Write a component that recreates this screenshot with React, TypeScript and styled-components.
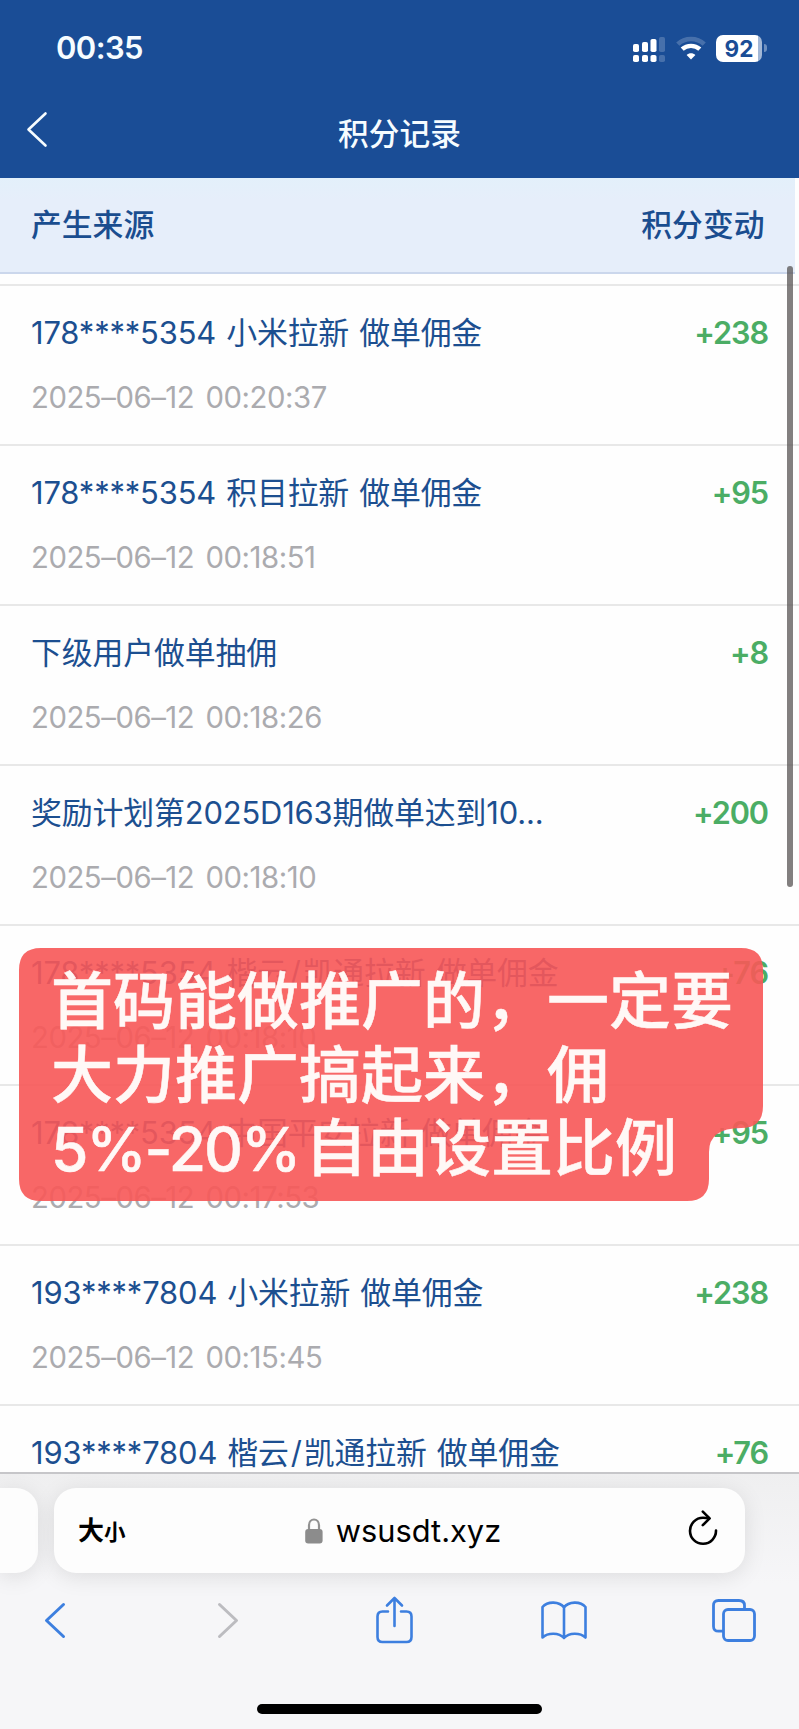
import React from 'react';
import styled, { createGlobalStyle } from 'styled-components';

const GlobalStyle = createGlobalStyle`
  *, *::before, *::after { box-sizing: border-box; }
  body {
    margin: 0;
    background: #fefefe;
    font-family: Inter, "Noto Sans CJK SC", sans-serif;
  }
  svg { display: block; flex: none; overflow: visible; }
`;

const Screen = styled.div`
  position: relative;
  display: flex;
  flex-direction: column;
  width: 799px;
  height: 1729px;
  overflow: hidden;
  background: #fefefe;
`;

const Header = styled.header`
  flex: none;
  height: 178px;
  background: #1a4d96;
  color: #f6fcff;
`;

const StatusBar = styled.div`
  display: flex;
  align-items: center;
  justify-content: space-between;
  height: 96px;
  padding: 0 32px 0 56px;
`;

const Clock = styled.span`
  font-size: 31px;
  font-weight: 600;
  line-height: 40px;
  letter-spacing: -0.6px;
`;

const StatusIcons = styled.div`
  display: flex;
  align-items: center;
  gap: 10px;
`;

const Battery = styled.div`
  display: flex;
  align-items: center;
  gap: 2px;
`;

const BatteryBody = styled.span`
  width: 46px;
  height: 27px;
  border-radius: 7px;
  background: linear-gradient(90deg, #fff 42px, #a3b8d6 42px);
  color: #1a4d96;
  font-size: 22.5px;
  font-weight: 700;
  line-height: 27px;
  text-align: center;
`;

const BatteryTip = styled.span`
  width: 3px;
  height: 8px;
  border-radius: 0 3px 3px 0;
  background: #6d8fbf;
`;

const TitleBar = styled.div`
  display: grid;
  grid-template-columns: 100px 1fr 100px;
  align-items: center;
  height: 76px;
  padding-left: 27px;
  padding-right: 27px;
  > svg { margin-bottom: 9px; }
`;

const Title = styled.h1`
  margin: 0;
  font-size: 30.7px;
  font-weight: 500;
  line-height: 40px;
  text-align: center;
`;

const ColumnHeads = styled.div`
  flex: none;
  display: flex;
  align-items: center;
  justify-content: space-between;
  width: 795px;
  height: 96px;
  padding: 0 30.5px 5px 31px;
  border-bottom: 2px solid #cbd7ec;
  background: linear-gradient(#e3f0fa, #e6eefa 22px);
  color: #1a4d8f;
  font-size: 30.8px;
  font-weight: 500;
`;

const List = styled.main`
  flex: 1;
  min-height: 0;
  padding-top: 10px;
  overflow: hidden;
`;

const Row = styled.article`
  display: grid;
  grid-template-columns: 1fr auto;
  align-content: start;
  height: 160px;
  padding: 25px 31px 0 31px;
  border-top: 2px solid #e8e8e8;
`;

const Source = styled.div`
  color: #1c4f90;
  font-size: 30.9px;
  line-height: 44px;
  font-weight: 400;
  letter-spacing: -0.15px;
  word-spacing: 1.5px;
  white-space: nowrap;
`;

const Slash = styled.span`
  padding: 0 2px;
`;

const Amount = styled.div`
  color: #4bad65;
  font-size: 30.7px;
  font-weight: 600;
  line-height: 44px;
  letter-spacing: -1.1px;
`;

const Time = styled.time`
  margin-top: 21px;
  color: #ababaf;
  font-size: 29.3px;
  font-weight: 400;
  line-height: 44px;
  letter-spacing: -0.45px;
  word-spacing: 3.5px;
`;

const ScrollThumb = styled.div`
  position: absolute;
  left: 787px;
  top: 266px;
  width: 6px;
  height: 621px;
  border-radius: 3px;
  background: rgba(84, 80, 80, 0.73);
`;

const Callout = styled.aside`
  position: absolute;
  left: 19px;
  top: 948px;
  width: 744px;
  height: 253px;
`;

const CalloutShape = styled.svg`
  position: absolute;
  inset: 0;
`;

const CalloutText = styled.p`
  position: relative;
  margin: 0;
  padding: 17px 0 0 32px;
  color: #fff8f6;
  font-size: 62px;
  font-weight: 500;
  line-height: 73.6px;
  white-space: nowrap;
  -webkit-text-stroke: 0.5px #fff8f6;
`;

const Latin = styled.span`
  font-size: 60.5px;
  letter-spacing: -2px;
  margin-right: 6px;
`;

const Browser = styled.footer`
  flex: none;
  height: 257px;
  border-top: 2px solid #c6c6c9;
  background: linear-gradient(#efeff0, #f6f6f8 110px);
  overflow: hidden;
`;

const AddressRow = styled.div`
  display: flex;
  gap: 16px;
  padding-top: 14px;
`;

const AdjacentTab = styled.div`
  width: 38px;
  height: 85px;
  border-radius: 0 22px 22px 0;
  background: #fdfdfd;
  box-shadow: 0 4px 22px rgba(0, 0, 0, 0.1);
`;

const AddressBar = styled.div`
  display: grid;
  grid-template-columns: 100px 1fr 90px;
  align-items: center;
  width: 691px;
  height: 85px;
  padding: 0 27px 0 24px;
  border-radius: 22px;
  background: #fdfdfd;
  box-shadow: 0 4px 22px rgba(0, 0, 0, 0.1);
  color: #000;
`;

const TextSize = styled.span`
  padding-top: 2px;
  font-size: 26px;
  font-weight: 700;
  line-height: 40px;
  small { font-size: 21.5px; }
`;

const Domain = styled.div`
  display: flex;
  align-items: center;
  justify-content: center;
  gap: 13px;
  font-size: 30.8px;
  line-height: 40px;
`;

const Reload = styled.div`
  display: flex;
  justify-content: flex-end;
  padding-bottom: 5px;
`;

const Toolbar = styled.nav`
  display: flex;
  align-items: center;
  justify-content: space-between;
  height: 94px;
  padding: 0 42px 0 32px;
`;

const ToolButton = styled.span<{ $nudge?: number }>`
  display: flex;
  justify-content: center;
  width: 46px;
  padding-left: ${(p) => p.$nudge ?? 0}px;
`;

const HomeIndicator = styled.div`
  width: 285px;
  height: 10px;
  margin: 37px auto 0;
  border-radius: 5px;
  background: #000;
`;

const records = [
  { source: '178****5354 小米拉新 做单佣金', time: '2025–06–12 00:20:37', amount: '+238' },
  { source: '178****5354 积目拉新 做单佣金', time: '2025–06–12 00:18:51', amount: '+95' },
  { source: '下级用户做单抽佣', time: '2025–06–12 00:18:26', amount: '+8' },
  { source: '奖励计划第2025D163期做单达到10...', time: '2025–06–12 00:18:10', amount: '+200' },
  { source: '178****5354 楷云/凯通拉新 做单佣金', time: '2025–06–12 00:18:10', amount: '+76' },
  { source: '178****5354 中国平安拉新 做单佣金', time: '2025–06–12 00:17:53', amount: '+95' },
  { source: '193****7804 小米拉新 做单佣金', time: '2025–06–12 00:15:45', amount: '+238' },
  { source: '193****7804 楷云/凯通拉新 做单佣金', amount: '+76' },
];

const SourceText = ({ text }: { text: string }) => {
  const [before, after] = text.split('/');
  return (
    <Source>
      {before}
      {after && <Slash>/</Slash>}
      {after}
    </Source>
  );
};

const SignalIcon = () => (
  <svg width="33" height="27" viewBox="0 0 33 27" fill="#fff">
    <rect x="0" y="9" width="6" height="8" rx="1.8" />
    <rect x="9" y="7" width="6" height="10" rx="1.8" />
    <rect x="17.5" y="4" width="6" height="13" rx="1.8" />
    <rect x="26" y="2" width="6" height="15" rx="1.8" opacity="0.2" />
    <rect x="0" y="20" width="6" height="7" rx="1.8" />
    <rect x="9" y="20" width="6" height="7" rx="1.8" />
    <rect x="17.5" y="20" width="6" height="7" rx="1.8" />
    <rect x="26" y="20" width="6" height="7" rx="1.8" opacity="0.2" />
  </svg>
);

const WifiIcon = () => (
  <svg width="30" height="24" viewBox="0 0 30 24" fill="none" stroke="#fff">
    <path d="M1.8 8.2C9 1.2 21 1.2 28.2 8.2" strokeWidth="4.6" opacity="0.2" />
    <path d="M6.2 13.2C11 8.7 19 8.7 23.8 13.2" strokeWidth="4.4" />
    <path d="M15 23.5L10.6 19C13 16.7 17 16.7 19.4 19Z" fill="#fff" stroke="none" />
  </svg>
);

const Chevron = ({ color, flip, width = 2.6 }: { color: string; flip?: boolean; width?: number }) => (
  <svg width="20" height="35" viewBox="0 0 20 35" fill="none" stroke={color} strokeWidth={width} strokeLinecap="round" strokeLinejoin="round">
    <path d={flip ? 'M1.5 1.5L18.5 17.5L1.5 33.5' : 'M18.5 1.5L1.5 17.5L18.5 33.5'} />
  </svg>
);

const LockIcon = () => (
  <svg width="18" height="26" viewBox="0 0 18 26">
    <path d="M4 12V7.2C4 -0.4 14 -0.4 14 7.2V12" fill="none" stroke="#929292" strokeWidth="2.2" />
    <rect x="0.2" y="11" width="17.4" height="14.6" rx="3" fill="#8c8c8c" />
  </svg>
);

const ReloadIcon = () => (
  <svg width="30" height="36" viewBox="0 0 30 36" fill="none" stroke="#000" strokeWidth="2.6" strokeLinecap="round" strokeLinejoin="round">
    <path d="M28 20.5A13 13 0 1 1 15 7.8C17.5 7.8 19.3 8 21 8.4" />
    <path d="M14.8 1.6L21.6 8.4L14.8 15.2" />
  </svg>
);

const ShareIcon = () => (
  <svg width="37" height="48" viewBox="0 0 37 48" fill="none" stroke="#3d7fdf" strokeWidth="2.6" strokeLinecap="round" strokeLinejoin="round">
    <path d="M12 15.5H6.5Q1.5 15.5 1.5 20.5V41Q1.5 46 6.5 46H30.5Q35.5 46 35.5 41V20.5Q35.5 15.5 30.5 15.5H25" />
    <path d="M18.5 30V2M11 9.5L18.5 2L26 9.5" />
  </svg>
);

const BookIcon = () => (
  <svg width="46" height="39" viewBox="0 0 46 39" fill="none" stroke="#3d7fdf" strokeWidth="2.6" strokeLinecap="round" strokeLinejoin="round">
    <path d="M23 6.5C18.5 0.2 6.5 0 1.5 6V36.5C7 31.5 18 31.5 23 37C28 31.5 39 31.5 44.5 36.5V6C39.5 0 27.5 0.2 23 6.5ZV37" />
  </svg>
);

const TabsIcon = () => (
  <svg width="44" height="43" viewBox="0 0 44 43" fill="none" stroke="#3d7fdf" strokeWidth="2.8" strokeLinejoin="round">
    <path d="M11.5 32.2H6.5Q1.5 32.2 1.5 27.2V6.5Q1.5 1.5 6.5 1.5H27Q32.5 1.5 32.5 6.5V10.5" />
    <rect x="11.5" y="10.5" width="31" height="31" rx="4.5" />
  </svg>
);

export default function App() {
  return (
    <Screen>
      <GlobalStyle />
      <Header>
        <StatusBar>
          <Clock>00:35</Clock>
          <StatusIcons>
            <SignalIcon />
            <WifiIcon />
            <Battery>
              <BatteryBody>92</BatteryBody>
              <BatteryTip />
            </Battery>
          </StatusIcons>
        </StatusBar>
        <TitleBar>
          <Chevron color="#f6fcff" />
          <Title>积分记录</Title>
        </TitleBar>
      </Header>
      <ColumnHeads>
        <span>产生来源</span>
        <span>积分变动</span>
      </ColumnHeads>
      <List>
        {records.map((r, i) => (
          <Row key={i}>
            <SourceText text={r.source} />
            <Amount>{r.amount}</Amount>
            {r.time && <Time>{r.time}</Time>}
          </Row>
        ))}
      </List>
      <Browser>
        <AddressRow>
          <AdjacentTab />
          <AddressBar>
            <TextSize>大<small>小</small></TextSize>
            <Domain>
              <LockIcon />
              <span>wsusdt.xyz</span>
            </Domain>
            <Reload><ReloadIcon /></Reload>
          </AddressBar>
        </AddressRow>
        <Toolbar>
          <ToolButton><Chevron color="#3d7fdf" width={3} /></ToolButton>
          <ToolButton $nudge={7}><Chevron color="#bcbcc0" width={3} flip /></ToolButton>
          <ToolButton><ShareIcon /></ToolButton>
          <ToolButton><BookIcon /></ToolButton>
          <ToolButton><TabsIcon /></ToolButton>
        </Toolbar>
        <HomeIndicator />
      </Browser>
      <ScrollThumb />
      <Callout>
        <CalloutShape width="744" height="253" viewBox="0 0 744 253">
          <path
            d="M22 0H722Q744 0 744 22V158Q744 180 722 180Q690 180 690 204V231Q690 253 668 253H22Q0 253 0 231V22Q0 0 22 0Z"
            fill="rgba(247, 88, 88, 0.91)"
          />
        </CalloutShape>
        <CalloutText>
          首码能做推广的，一定要<br />
          大力推广搞起来，佣<br />
          <Latin>5%-20%</Latin>自由设置比例
        </CalloutText>
      </Callout>
    </Screen>
  );
}
